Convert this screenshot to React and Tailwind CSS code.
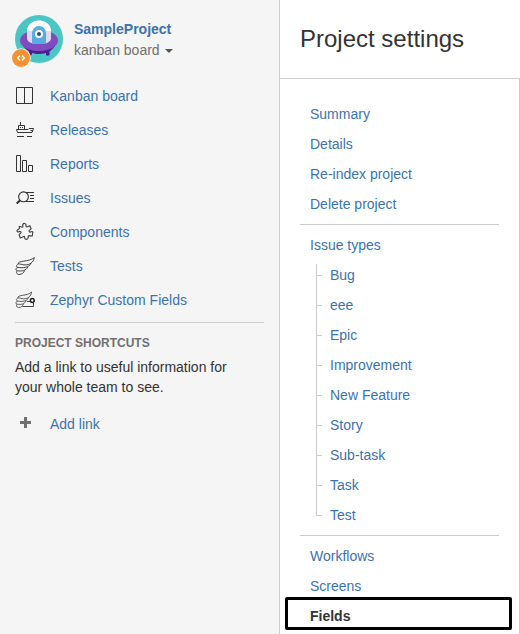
const ICON = 'block h-[20px] w-[20px] shrink-0 overflow-visible';

// Every icon is drawn on a 20px grid whose origin is the left edge of the menu.
function BoardIcon() {
  return (
    <svg className={ICON} viewBox="0 0 20 20" fill="none" stroke="#333" strokeWidth="1">
      <path d="M1.5 1.5h16v16h-16zM9.5 1.5v16" />
    </svg>
  );
}

function ShipIcon() {
  return (
    <svg className={ICON} viewBox="0 0 20 20" fill="none" stroke="#333" strokeWidth="1">
      <path d="M5.5 2v3M3.5 9V5.5h6V9M1.5 9.5h11.5l1-1h4.5l-1.5 4H2.5zM15.5 10.5h2" />
      <path d="M5 7.5h1M7 7.5h1M2 16.5h7M12 16.5h5" />
    </svg>
  );
}

function ReportsIcon() {
  return (
    <svg className={ICON} viewBox="0 0 20 20" fill="none" stroke="#333" strokeWidth="1">
      <path d="M1.5 1.5h4v16h-4zM7.5 6.5h4v11h-4zM13.5 11.5h4v6h-4z" />
    </svg>
  );
}

function IssuesIcon() {
  return (
    <svg className={ICON} viewBox="0 0 20 20" fill="none" stroke="#333" strokeWidth="1.1">
      <circle cx="8.5" cy="8.8" r="4.9" />
      <path d="M5.2 12.3 1.7 15.6" strokeWidth="2" />
      <path d="M11 4.5h8M15 7.5h4M15 10.5h4M11 13.5h8" strokeWidth="1" />
    </svg>
  );
}

function ComponentsIcon() {
  return (
    <svg className={ICON} viewBox="0 0 20 20" fill="none" stroke="#444" strokeWidth="1.2" strokeLinejoin="round">
      <path d="M4.300 4.300 7.300 5.200C8.600 5 7.300 3.600 7.800 2.500 8.500 1 10.700 1.200 11 2.700 11.100 3.900 10.700 5.100 12 5L14.800 3.700 16 6.500C16.200 7.800 14.300 7.600 14.100 8.700 14 10 15.100 10.300 16.100 9.800 17.200 9.100 18.200 9.900 17.700 11L17.200 14 14 13.600C12.600 13.700 13.500 15 13 16.200 12.300 17.700 10.100 17.600 9.700 16.200 9.500 15 9.700 14.200 8.700 14.500L5.300 16 4.200 13C4.100 11.800 5.900 11.800 6 10.600 6 9.400 4.900 9.200 4 9.700 2.900 10.200 1.700 9.600 2.100 8.400 2.500 7.400 4 7.500 4.400 6.600Z" />
    </svg>
  );
}

function Wing() {
  return (
    <>
      <path d="M3.300 8C2 4.300 14 6.200 19.300 1.600 18.600 6.500 14.500 9 10 8.900 7 8.900 5 7.600 3.300 8Z" />
      <path d="M3.300 8C.8 8.900 1 11 3 11.400 8 12.300 14 11.600 16 7.400" />
      <path d="M3 11.400C.3 12 .4 14.400 2.300 14.700 6.500 15.600 11.500 14.600 12.700 11" />
      <path d="M2.300 14.700C.8 16 1.600 18.400 4 18.400 7 18.400 8.700 17 9.600 14.500" />
    </>
  );
}

function WingIcon() {
  return (
    <svg className={ICON} viewBox="0 0 20 20" fill="none" stroke="#444" strokeWidth="1">
      <Wing />
    </svg>
  );
}

function WingGearIcon() {
  return (
    <svg className={ICON} viewBox="0 0 20 20" fill="none" stroke="#444" strokeWidth="1">
      <g transform="translate(.2 .6) scale(.85 .92)">
        <Wing />
      </g>
      <circle cx="17.3" cy="10.5" r="1.9" stroke="#222" strokeWidth="1.5" />
      <path d="M12 11.500h3M18.500 13v3.500H7.500" />
    </svg>
  );
}

function Avatar() {
  return (
    <svg className="-ml-[3px] block h-[53px] w-[51px] shrink-0" viewBox="0 0 51 53">
      <circle cx="27" cy="24" r="24" fill="#4bc6c5" />
      <path d="M17 34h3v5.5q-1.500 1.500-3 0zM34 34h3.500v6q-1.700 1.500-3.500 0z" fill="#4b1f91" />
      <path d="M11 31c5 6 9 8 16 8s13-3 16-8z" fill="#4b1f91" />
      <ellipse cx="27" cy="25.500" rx="19" ry="10.500" fill="#7f4cc0" />
      <path d="M15 17a12 11.500 0 0 1 24 0v7q-1 5-12 5t-12-5z" fill="#e2d8f1" />
      <path d="M15 16a12 10.500 0 0 1 24 0z" fill="#fff" />
      <path d="M20 18a7 7 0 0 1 14 0v11H20z" fill="#58ace4" />
      <circle cx="27" cy="19" r="4" fill="#fff" />
      <circle cx="27" cy="19" r="2" fill="#294d78" />
      <circle cx="9" cy="43" r="9.800" fill="#f5f5f5" />
      <circle cx="9" cy="43" r="9" fill="#f79232" />
      <path d="M8 40.500 5.700 43 8 45.500M10 40.500l2.300 2.500-2.300 2.500" fill="none" stroke="#fff" strokeWidth="1.500" />
    </svg>
  );
}

const menu = [
  ['Kanban board', BoardIcon],
  ['Releases', ShipIcon],
  ['Reports', ReportsIcon],
  ['Issues', IssuesIcon],
  ['Components', ComponentsIcon],
  ['Tests', WingIcon],
  ['Zephyr Custom Fields', WingGearIcon],
];

const issueTypes = ['Bug', 'eee', 'Epic', 'Improvement', 'New Feature', 'Story', 'Sub-task', 'Task', 'Test'];

function SettingsLink({ children }) {
  return <a className="block h-[30px] pl-[10px] leading-[30px]">{children}</a>;
}

function Sidebar() {
  return (
    <aside className="flex w-[280px] shrink-0 flex-col border-r border-[#ccc] bg-[#f5f5f5] pt-[15px] pr-[15px] pl-[15px]">
      <header className="flex h-[64px] gap-[11px]">
        <Avatar />
        <div className="pt-[4px] leading-5">
          <div className="font-bold text-[#3b73af]">SampleProject</div>
          <div className="flex items-center gap-[5px] pt-px text-[#707070]">
            kanban board
            <svg className="mt-px h-[4px] w-[8px]" viewBox="0 0 8 4">
              <path d="M0 0h8L4 4z" fill="#555" />
            </svg>
          </div>
        </div>
      </header>
      <nav>
        {menu.map(([label, Icon]) => (
          <a key={label} className="flex h-[34px] items-center gap-[15px] text-[#3b73af]">
            <Icon />
            {label}
          </a>
        ))}
      </nav>
      <section className="mt-[5px] border-t border-[#ccc] pt-[10px]">
        <h2 className="text-[12px] leading-[20px] font-bold text-[#707070]">PROJECT SHORTCUTS</h2>
        <p className="mt-[4px] w-[225px] leading-[20px] text-[#333]">
          Add a link to useful information for your whole team to see.
        </p>
        <a className="mt-[10px] flex h-[34px] items-center text-[#3b73af]">
          <svg className="mr-[19px] mb-[3px] ml-[5px] h-[11px] w-[11px]" viewBox="0 0 11 11">
            <path d="M4 0h3v4h4v3H7v4H4V7H0V4h4z" fill="#707070" />
          </svg>
          Add link
        </a>
      </section>
    </aside>
  );
}

export default function App() {
  return (
    <div className="relative flex h-[634px] w-[520px] overflow-hidden bg-white font-['Liberation_Sans',Arial,sans-serif] text-[14px]">
      <Sidebar />
      <main className="flex w-[240px] flex-col">
        <h1 className="h-[78px] shrink-0 pl-[20px] text-[24px] leading-[78px] text-[#333]">Project settings</h1>
        <nav className="grow border-t border-r border-[#ccc] pt-[20px] pr-[20px] pl-[20px] text-[#3b73af]">
          <SettingsLink>Summary</SettingsLink>
          <SettingsLink>Details</SettingsLink>
          <SettingsLink>Re-index project</SettingsLink>
          <SettingsLink>Delete project</SettingsLink>
          <div className="mt-[5px] border-t border-[#ccc] pt-[5px]">
            <SettingsLink>Issue types</SettingsLink>
            <ul className="pl-[16px]">
              {issueTypes.map((type, i) => (
                <li key={type} className="flex h-[30px] leading-[30px]">
                  <span className="flex w-[14px] flex-col">
                    <span
                      className={
                        i === 0
                          ? 'mt-[4px] h-[12px] w-[6px] border-b border-l border-[#ccc]'
                          : 'h-[16px] w-[6px] border-b border-l border-[#ccc]'
                      }
                    />
                    {i < issueTypes.length - 1 && <span className="w-px grow bg-[#ccc]" />}
                  </span>
                  {type}
                </li>
              ))}
            </ul>
          </div>
          <div className="mt-[5px] border-t border-[#ccc] pt-[5px]">
            <SettingsLink>Workflows</SettingsLink>
            <SettingsLink>Screens</SettingsLink>
            <a className="block h-[30px] pl-[10px] leading-[30px] font-bold text-[#333]">Fields</a>
          </div>
        </nav>
      </main>
      <div className="absolute top-[597px] left-[285px] h-[33px] w-[227px] rounded-[2px] border-3 border-black" />
    </div>
  );
}
